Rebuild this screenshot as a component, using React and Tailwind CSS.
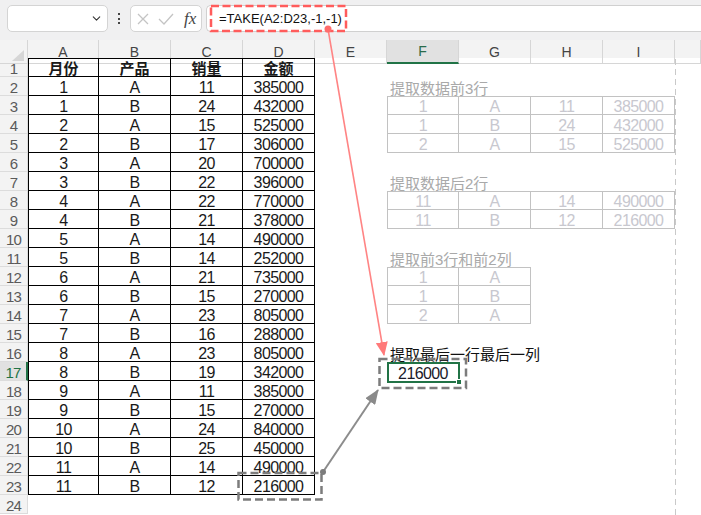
import { ChevronDown } from 'lucide-react';

const COLS = ['A', 'B', 'C', 'D', 'E', 'F', 'G', 'H', 'I', 'J'];

const HEAD = ['月份', '产品', '销量', '金额'];

const MAIN = [
  [1, 'A', 11, 385000], [1, 'B', 24, 432000], [2, 'A', 15, 525000], [2, 'B', 17, 306000],
  [3, 'A', 20, 700000], [3, 'B', 22, 396000], [4, 'A', 22, 770000], [4, 'B', 21, 378000],
  [5, 'A', 14, 490000], [5, 'B', 14, 252000], [6, 'A', 21, 735000], [6, 'B', 15, 270000],
  [7, 'A', 23, 805000], [7, 'B', 16, 288000], [8, 'A', 23, 805000], [8, 'B', 19, 342000],
  [9, 'A', 11, 385000], [9, 'B', 15, 270000], [10, 'A', 24, 840000], [10, 'B', 25, 450000],
  [11, 'A', 14, 490000], [11, 'B', 12, 216000],
];

// faded result blocks: first row, last row, first col, last col, data
const LIGHT = [
  { r0: 3, r1: 5, c0: 5, c1: 8, data: MAIN.slice(0, 3) },
  { r0: 8, r1: 9, c0: 5, c1: 8, data: MAIN.slice(20, 22) },
  { r0: 12, r1: 14, c0: 5, c1: 6, data: MAIN.slice(0, 3) },
];

const LABELS = {
  2: { text: '提取数据前3行', dark: false },
  7: { text: '提取数据后2行', dark: false },
  11: { text: '提取前3行和前2列', dark: false },
  16: { text: '提取最后一行最后一列', dark: true },
};

const ROW_GRID = 'grid grid-cols-[28px_71px_repeat(8,72px)_1fr]';

function Cell({ r, c }) {
  const base = 'relative flex items-end justify-center pb-[1px] leading-[12px] whitespace-nowrap';

  // source table A1:D23
  if (r <= 23 && c <= 3) {
    const text = r === 1 ? HEAD[c] : MAIN[r - 2][c];
    return (
      <div
        className={
          base +
          ' border-r border-b border-black text-[#1a1a1a]' +
          (c === 0 ? ' border-l' : '') +
          (r === 1 ? ' border-t font-bold text-[15px]' : ' text-[16px] tracking-[-0.6px]')
        }
      >
        {text}
      </div>
    );
  }

  const block = LIGHT.find((b) => r >= b.r0 && r <= b.r1 && c >= b.c0 && c <= b.c1);
  if (block) {
    const text = block.data[r - block.r0][c - 5];
    return (
      <div
        className={
          base +
          ' border-r border-b border-[#c2c2c2] text-[#c8c8cf] text-[16px] tracking-[-0.6px]' +
          (c === block.c0 ? ' border-l' : '') +
          (r === block.r0 ? ' border-t' : '')
        }
      >
        {text}
      </div>
    );
  }

  if (c === 5 && LABELS[r]) {
    return (
      <div
        className={
          'relative flex items-end justify-start pl-[3px] pb-[1px] leading-[12px] whitespace-nowrap text-[15px] ' +
          (LABELS[r].dark ? 'text-[#111]' : 'text-[#a9a9a9]')
        }
      >
        {LABELS[r].text}
      </div>
    );
  }

  if (r === 17 && c === 5) {
    return (
      <div className={base + ' text-[16px] tracking-[-0.6px] text-[#1a1a2a]'}>
        216000
        <div className="absolute left-0 top-0 -right-[1px] -bottom-[2px] border-2 border-[#217346]" />
        <div className="absolute -right-[3px] -bottom-[4px] w-[6px] h-[6px] bg-[#217346] border border-white" />
      </div>
    );
  }

  return <div />;
}

function Toolbar() {
  return (
    <div className="h-[40px] bg-[#f0f0f1] flex items-start pt-[5px] pl-[7px]">
      <div className="w-[101px] h-[27px] bg-white rounded-[5px] border border-[#d4d4d4] flex items-center justify-end pr-[4px]">
        <ChevronDown size={13} strokeWidth={2} className="text-[#333]" />
      </div>
      <div className="w-[22px] h-[27px] flex flex-col items-center justify-center gap-[2.5px]">
        <div className="w-[2px] h-[2px] bg-[#444]" />
        <div className="w-[2px] h-[2px] bg-[#444]" />
        <div className="w-[2px] h-[2px] bg-[#444]" />
      </div>
      <div className="w-[72px] h-[27px] bg-white rounded-[5px] border border-[#d4d4d4] flex items-center pl-[6px]">
        <svg width="12" height="12" viewBox="0 0 12 12" className="ml-[0px]">
          <path d="M1 1 L11 11 M11 1 L1 11" stroke="#c4c4c4" strokeWidth="1.3" fill="none" />
        </svg>
        <svg width="16" height="12" viewBox="0 0 16 12" className="ml-[9px]">
          <path d="M1 6 L6 11 L15 1" stroke="#c4c4c4" strokeWidth="1.3" fill="none" />
        </svg>
        <span className="ml-[10px] font-['Liberation_Serif',serif] italic text-[17px] leading-none text-[#444]">
          fx
        </span>
      </div>
      <div className="ml-[4px] flex-1 h-[27px] bg-white border-y border-l border-[#d0d0d0] rounded-l-[5px] flex items-center pl-[12px] text-[13px] text-[#111]">
        =TAKE(A2:D23,-1,-1)
      </div>
    </div>
  );
}

function ColumnHeader() {
  return (
    <div className={ROW_GRID + ' h-[18px] bg-[#f3f3f3]'}>
      <div className="relative border-r border-b border-[#d6d6d6]">
        <svg width="12" height="11" viewBox="0 0 12 11" className="absolute right-[3px] bottom-[2px]">
          <path d="M12 0 L12 11 L0 11 Z" fill="#d6d6d6" />
        </svg>
      </div>
      {COLS.map((col) =>
        col === 'F' ? (
          <div
            key={col}
            className="flex items-center justify-center pt-[1px] text-[14px] text-[#2a6b4a] bg-[#e1e1e1] border-r border-[#d6d6d6] border-b-2 border-b-[#217346]"
          >
            {col}
          </div>
        ) : (
          <div
            key={col}
            className="flex items-center justify-center pt-[1px] text-[14px] text-[#444] border-r border-b border-[#d6d6d6]"
          >
            {col === 'J' ? '' : col}
          </div>
        )
      )}
    </div>
  );
}

function Overlay() {
  return (
    <svg className="absolute inset-0 pointer-events-none" width="701" height="515" viewBox="0 0 701 515">
      <defs>
        <marker id="ahRed" markerUnits="userSpaceOnUse" markerWidth="14" markerHeight="12" refX="13" refY="6" orient="auto">
          <path d="M0,0 L14,6 L0,12 Z" fill="#ff7a7a" />
        </marker>
        <marker id="ahGray" markerUnits="userSpaceOnUse" markerWidth="15" markerHeight="12" refX="14" refY="6" orient="auto">
          <path d="M0,0 L15,6 L0,12 Z" fill="#8a8a8a" />
        </marker>
      </defs>

      {/* page break */}
      <line x1="675.5" y1="59" x2="675.5" y2="515" stroke="#c9c9c9" strokeWidth="1" strokeDasharray="6 4" />

      {/* formula highlight */}
      <rect x="211" y="6" width="135" height="25" fill="none" stroke="#ff5c5c" strokeWidth="2.5" strokeDasharray="8 3.5" />
      <line x1="328" y1="29" x2="384" y2="355" stroke="#ff8484" strokeWidth="1.6" markerEnd="url(#ahRed)" />
      <circle cx="328" cy="29" r="3.5" fill="#ff6b6b" />

      {/* source and result cells */}
      <rect x="238.5" y="473" width="83" height="26.5" fill="none" stroke="#7c7c7c" strokeWidth="2.5" strokeDasharray="8 4" />
      <rect x="379.5" y="359" width="86.5" height="29" fill="none" stroke="#7c7c7c" strokeWidth="2.5" strokeDasharray="8 4" />
      <line x1="323" y1="472" x2="378" y2="390" stroke="#8c8c8c" strokeWidth="2" markerEnd="url(#ahGray)" />
      <circle cx="323" cy="472" r="3" fill="#7c7c7c" />
    </svg>
  );
}

export default function App() {
  const rows = Array.from({ length: 24 }, (_, i) => i + 1);

  return (
    <div className="relative w-[701px] h-[515px] overflow-hidden bg-white font-['Liberation_Sans','Noto_Sans_CJK_SC',sans-serif]">
      <Toolbar />
      <ColumnHeader />
      {rows.map((r) => (
        <div key={r} className={ROW_GRID + ' h-[19px]'}>
          {r === 17 ? (
            <div className="flex items-end justify-center pb-[1px] leading-[12px] text-[15px] tracking-[-0.8px] text-[#217346] bg-[#e1e1e1] border-b border-[#dcdcdc] border-r-2 border-r-[#217346]">
              {r}
            </div>
          ) : (
            <div className="flex items-end justify-center pb-[1px] leading-[12px] text-[15px] tracking-[-0.8px] text-[#5a5a5a] bg-[#f3f3f3] border-b border-r border-[#dcdcdc]">
              {r}
            </div>
          )}
          {COLS.map((col, c) => (
            <Cell key={col} r={r} c={c} />
          ))}
        </div>
      ))}
      <Overlay />
    </div>
  );
}
